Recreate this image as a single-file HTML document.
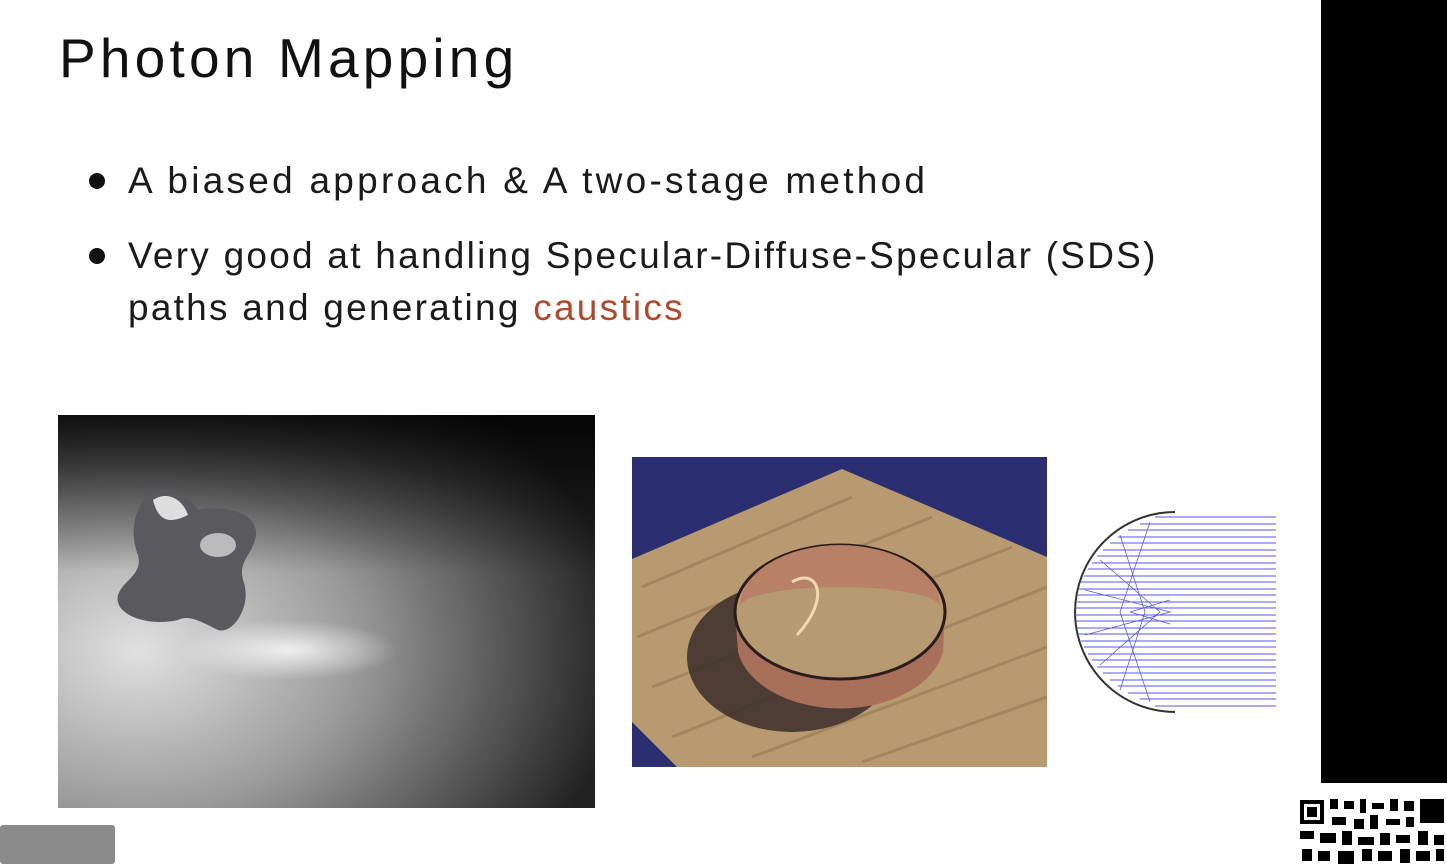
<!DOCTYPE html>
<html><head><meta charset="utf-8"><style>
html,body{margin:0;padding:0;width:1447px;height:864px;overflow:hidden;background:#fff;position:relative;font-family:"Liberation Sans","DejaVu Sans",sans-serif}
.t{position:absolute;left:59px;top:26px;font-size:55px;color:#111;letter-spacing:4.2px}
.b{position:absolute;font-size:37px;color:#1a1a1a;line-height:52px}
.dot{position:absolute;width:16px;height:16px;border-radius:50%;background:#111}
.black{position:absolute;left:1321px;top:0;width:126px;height:783px;background:#000}
</style></head><body>
<div class="t">Photon Mapping</div>
<div class="dot" style="left:89px;top:173px"></div>
<div class="b" style="left:128px;top:155px;letter-spacing:3.25px">A biased approach &amp; A two-stage method</div>
<div class="dot" style="left:89px;top:248px"></div>
<div class="b" style="left:128px;top:230px;letter-spacing:2.25px">Very good at handling Specular-Diffuse-Specular (SDS)<br>paths and generating <span style="color:#b4472a">caustics</span></div>

<svg style="position:absolute;left:58px;top:415px" width="537" height="393">
<defs>
<radialGradient id="g1" cx="0.15" cy="0.6" r="0.9"><stop offset="0" stop-color="#e0e0e0"/><stop offset="0.45" stop-color="#9a9a9a"/><stop offset="1" stop-color="#222"/></radialGradient>
<linearGradient id="g2" x1="0" y1="0" x2="0" y2="1"><stop offset="0" stop-color="#000" stop-opacity="0.85"/><stop offset="0.4" stop-color="#000" stop-opacity="0"/></linearGradient>
<radialGradient id="g3" cx="0.5" cy="0.5" r="0.5"><stop offset="0" stop-color="#fff" stop-opacity="0.8"/><stop offset="1" stop-color="#fff" stop-opacity="0"/></radialGradient>
</defs>
<rect width="537" height="393" fill="url(#g1)"/>
<rect width="537" height="393" fill="url(#g2)"/>
<ellipse cx="230" cy="235" rx="110" ry="30" fill="url(#g3)"/>
<path d="M90 80 C110 65 130 80 140 95 C160 90 200 95 198 120 C195 140 180 145 185 165 C195 190 175 220 160 215 C140 205 130 200 120 205 C90 212 55 200 60 180 C65 165 85 160 80 140 C72 120 75 95 90 80Z" fill="#5a5a5e"/>
<path d="M95 85 C110 75 125 85 130 100 C110 110 100 105 95 85Z" fill="#ddd"/>
<ellipse cx="160" cy="130" rx="18" ry="12" fill="#bbb"/>
</svg>

<svg style="position:absolute;left:632px;top:457px" width="415" height="310">
<rect width="415" height="310" fill="#2b2f72"/>
<polygon points="0,102 210,12 415,100 415,310 45,310 0,265" fill="#b89a70"/>
<g stroke="#8d7150" stroke-width="3" opacity="0.5">
<line x1="10" y1="130" x2="220" y2="40"/><line x1="5" y1="180" x2="300" y2="60"/><line x1="20" y1="230" x2="380" y2="90"/><line x1="40" y1="280" x2="415" y2="130"/><line x1="120" y1="300" x2="415" y2="190"/><line x1="230" y1="305" x2="415" y2="240"/>
</g>
<ellipse cx="160" cy="200" rx="105" ry="75" fill="#3a2d2a" opacity="0.85"/>
<path d="M103 155 A105 67 0 0 1 313 155 L311 195 A104 68 0 0 1 106 195Z" fill="#a8705a"/>
<ellipse cx="208" cy="155" rx="105" ry="67" fill="#b69a72" stroke="#2a1c1a" stroke-width="3"/>
<path d="M108 150 A100 62 0 0 1 308 150 A100 20 0 0 0 108 150Z" fill="#b88066"/>
<path d="M160 125 C185 110 200 140 165 178" fill="none" stroke="#f0d8b0" stroke-width="3"/>
</svg>

<svg style="position:absolute;left:1060px;top:500px" width="230" height="225">
<path d="M115 12 A100 100 0 0 0 115 212" fill="none" stroke="#333" stroke-width="2"/>
<g stroke="#3333ee" stroke-width="0.8" fill="none" opacity="0.8">
<path d="M90 22 L60 112 L90 202"/><path d="M60 35 L85 112 L60 190"/><path d="M40 60 L100 112 L40 165"/><path d="M25 90 L110 112 L25 135"/><path d="M70 112 L110 100 M70 112 L110 124"/>
</g>
<g stroke="#5555ee" stroke-width="1">
<line x1="95" y1="17" x2="216" y2="17"/><line x1="80" y1="24" x2="216" y2="24"/><line x1="68" y1="30" x2="216" y2="30"/><line x1="58" y1="37" x2="216" y2="37"/><line x1="50" y1="43" x2="216" y2="43"/><line x1="43" y1="50" x2="216" y2="50"/><line x1="37" y1="56" x2="216" y2="56"/><line x1="32" y1="63" x2="216" y2="63"/><line x1="28" y1="69" x2="216" y2="69"/><line x1="24" y1="76" x2="216" y2="76"/><line x1="21" y1="82" x2="216" y2="82"/><line x1="19" y1="89" x2="216" y2="89"/><line x1="17" y1="95" x2="216" y2="95"/><line x1="16" y1="102" x2="216" y2="102"/><line x1="15" y1="108" x2="216" y2="108"/><line x1="15" y1="115" x2="216" y2="115"/><line x1="16" y1="121" x2="216" y2="121"/><line x1="17" y1="128" x2="216" y2="128"/><line x1="19" y1="134" x2="216" y2="134"/><line x1="21" y1="141" x2="216" y2="141"/><line x1="24" y1="147" x2="216" y2="147"/><line x1="28" y1="154" x2="216" y2="154"/><line x1="32" y1="160" x2="216" y2="160"/><line x1="37" y1="167" x2="216" y2="167"/><line x1="43" y1="173" x2="216" y2="173"/><line x1="50" y1="180" x2="216" y2="180"/><line x1="58" y1="186" x2="216" y2="186"/><line x1="68" y1="193" x2="216" y2="193"/><line x1="80" y1="199" x2="216" y2="199"/><line x1="95" y1="206" x2="216" y2="206"/>
</g>
</svg>

<div class="black"></div>
<svg style="position:absolute;left:1298px;top:797px" width="149" height="67">
<rect width="149" height="67" fill="#fff"/>
<rect x="2" y="3" width="24" height="24" fill="#000"/><rect x="6" y="7" width="16" height="16" fill="#fff"/><rect x="9" y="10" width="10" height="10" fill="#000"/>
<g fill="#000"><rect x="32" y="2" width="8" height="10"/><rect x="46" y="4" width="10" height="8"/><rect x="62" y="2" width="6" height="14"/><rect x="74" y="6" width="12" height="6"/><rect x="92" y="2" width="8" height="12"/><rect x="106" y="4" width="10" height="10"/><rect x="122" y="2" width="24" height="24"/>
<rect x="34" y="20" width="14" height="8"/><rect x="56" y="22" width="10" height="10"/><rect x="72" y="18" width="8" height="14"/><rect x="88" y="22" width="14" height="6"/><rect x="108" y="20" width="8" height="10"/>
<rect x="2" y="34" width="14" height="8"/><rect x="22" y="36" width="16" height="10"/><rect x="44" y="34" width="10" height="14"/><rect x="60" y="40" width="16" height="8"/><rect x="82" y="36" width="10" height="12"/><rect x="98" y="38" width="14" height="8"/><rect x="120" y="34" width="10" height="14"/><rect x="136" y="38" width="10" height="10"/>
<rect x="4" y="52" width="10" height="12"/><rect x="20" y="54" width="12" height="10"/><rect x="40" y="54" width="16" height="13"/><rect x="64" y="52" width="10" height="12"/><rect x="80" y="54" width="14" height="10"/><rect x="102" y="52" width="10" height="14"/><rect x="118" y="54" width="14" height="10"/><rect x="138" y="52" width="8" height="12"/></g>
</svg>
<div style="position:absolute;left:0;top:825px;width:115px;height:39px;background:#8a8a8a;border-radius:3px"></div>
</body></html>
